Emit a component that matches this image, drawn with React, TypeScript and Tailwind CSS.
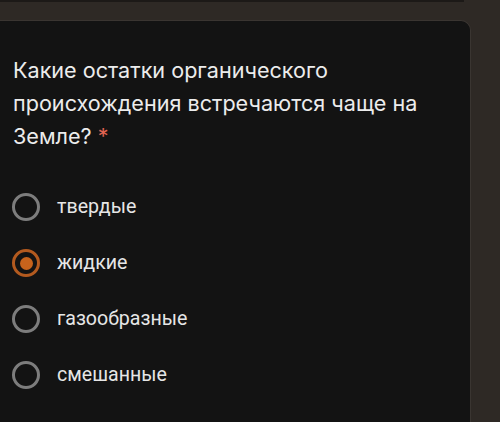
import React from "react";

const options = ["твердые", "жидкие", "газообразные", "смешанные"];

const Radio = ({ checked }: { checked: boolean }) =>
  checked ? (
    <div className="flex h-[28px] w-[28px] items-center justify-center rounded-full border-[3px] border-[#b35a1f]">
      <div className="h-[13px] w-[13px] rounded-full bg-[#c7631c]" />
    </div>
  ) : (
    <div className="h-[28px] w-[28px] rounded-full border-[3px] border-[#7d7d7d]" />
  );

export default function App() {
  return (
    <div className="flex h-[422px] w-[500px] flex-col overflow-hidden bg-[#2e2925]">
      <div className="h-[2px] w-[464px] shrink-0 bg-[#1c1917]" />
      <div className="h-[18px] shrink-0" />
      <div className="flex flex-1">
        <div className="w-[471px] rounded-tr-[10px] border-r border-t border-[#3a3531] bg-[#131313] pl-[13px] pt-[33px]">
          <div
            className="text-[21.6px] leading-[33px] text-[#ececec]"
            style={{ fontFamily: "Inter, 'Noto Sans', sans-serif" }}
          >
            Какие остатки органического
            <br />
            происхождения встречаются чаще на
            <br />
            Земле? <span className="text-[#e06452]">*</span>
          </div>
          <div
            className="mt-[40px] ml-[-1px] flex flex-col gap-[28px]"
            style={{ fontFamily: "Roboto, sans-serif" }}
          >
            {options.map((o, i) => (
              <div key={o} className="flex h-[28px] items-center gap-[17px]">
                <Radio checked={i === 1} />
                <span className="text-[19.6px] text-[#e6e6e6]">{o}</span>
              </div>
            ))}
          </div>
        </div>
        <div className="flex-1" />
      </div>
    </div>
  );
}
